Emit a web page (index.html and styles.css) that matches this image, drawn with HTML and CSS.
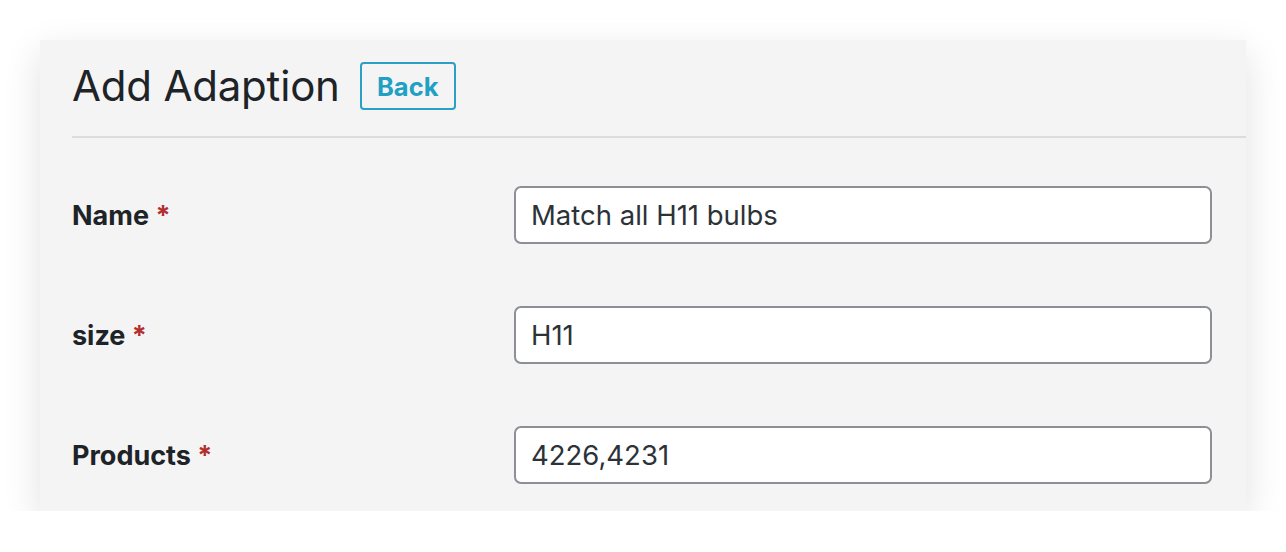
FILE: index.html
```html
<!DOCTYPE html>
<html lang="en">
<head>
<meta charset="utf-8">
<title>Add Adaption</title>
<link rel="stylesheet" href="styles.css">
</head>
<body>
<div class="card">
  <div class="header">
    <h1 class="title">Add Adaption</h1>
    <a class="back-btn" href="#">Back</a>
  </div>
  <hr class="divider">
  <form class="form">
    <label class="label">Name <span class="req">*</span></label>
    <input class="field" type="text" value="Match all H11 bulbs">
    <label class="label">size <span class="req">*</span></label>
    <input class="field" type="text" value="H11">
    <label class="label">Products <span class="req">*</span></label>
    <input class="field" type="text" value="4226,4231">
  </form>
</div>
</body>
</html>
```
FILE: styles.css
```css
html, body {
  margin: 0;
  padding: 0;
  background: #ffffff;
}
body {
  font-family: Inter, "Noto Sans", "Liberation Sans", sans-serif;
  color: #1d2327;
  padding: 40px 0 0 40px;
}
.card {
  width: 1206px;
  height: 471px;
  box-sizing: border-box;
  background: #f4f4f4;
  box-shadow: 0 12px 36px rgba(0, 0, 0, 0.12);
  padding-left: 32px;
}
.header {
  display: flex;
  align-items: center;
  gap: 20px;
  padding-top: 22px;
  padding-bottom: 26px;
}
.title {
  margin: 0;
  font-size: 42px;
  font-weight: 400;
  line-height: 48px;
  letter-spacing: -0.2px;
}
.back-btn {
  display: flex;
  align-items: center;
  justify-content: center;
  width: 96px;
  height: 48px;
  box-sizing: border-box;
  border: 2px solid #2aa1c4;
  border-radius: 4px;
  color: #21a0c5;
  font-weight: 700;
  font-size: 25.5px;
  text-decoration: none;
}
.divider {
  margin: 0;
  border: 0;
  height: 2px;
  background: #dcdcde;
}
.form {
  display: grid;
  grid-template-columns: 442px 698px;
  row-gap: 62px;
  align-items: center;
  padding-top: 48px;
}
.label {
  font-size: 27px;
  font-weight: 700;
}
.req {
  color: #b32d2e;
}
.field {
  height: 58px;
  box-sizing: border-box;
  border: 2px solid #8c8f94;
  border-radius: 7px;
  background: #fff;
  padding: 0 15px;
  font-family: Inter, "Noto Sans", "Liberation Sans", sans-serif;
  font-size: 27.5px;
  color: #2c3338;
}
```
